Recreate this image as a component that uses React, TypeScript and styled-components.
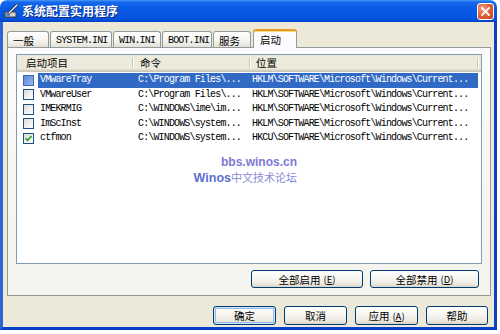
import React from "react";
import styled, { createGlobalStyle, css } from "styled-components";

const CJK = `"Noto Sans CJK SC", "Liberation Sans", sans-serif`;
const MONO = `"Liberation Mono", "Noto Sans CJK SC", monospace`;

const GlobalStyle = createGlobalStyle`
  html, body {
    margin: 0;
    padding: 0;
    background: #ffffff;
  }
  body {
    font-family: ${CJK};
  }
`;

type Entry = {
  name: string;
  cmd: string;
  loc: string;
  checked?: boolean;
  selected?: boolean;
};

const entries: Entry[] = [
  { name: "VMwareTray", cmd: "C:\\Program Files\\...", loc: "HKLM\\SOFTWARE\\Microsoft\\Windows\\Current...", selected: true },
  { name: "VMwareUser", cmd: "C:\\Program Files\\...", loc: "HKLM\\SOFTWARE\\Microsoft\\Windows\\Current..." },
  { name: "IMEKRMIG", cmd: "C:\\WINDOWS\\ime\\im...", loc: "HKLM\\SOFTWARE\\Microsoft\\Windows\\Current..." },
  { name: "ImScInst", cmd: "C:\\WINDOWS\\system...", loc: "HKLM\\SOFTWARE\\Microsoft\\Windows\\Current..." },
  { name: "ctfmon", cmd: "C:\\WINDOWS\\system...", loc: "HKCU\\SOFTWARE\\Microsoft\\Windows\\Current...", checked: true },
];

const tabs = [
  { label: "一般", w: 42, mono: false },
  { label: "SYSTEM.INI", w: 62, mono: true },
  { label: "WIN.INI", w: 48, mono: true },
  { label: "BOOT.INI", w: 50, mono: true },
  { label: "服务", w: 38, mono: false },
  { label: "启动", w: 44, mono: false, active: true },
];

const COLS = "116px 117px 228px 1fr";

const Window = styled.div`
  width: 497px;
  height: 330px;
  display: flex;
  flex-direction: column;
`;

const TitleBar = styled.div`
  height: 22px;
  flex: none;
  display: flex;
  align-items: center;
  gap: 4px;
  padding: 0 3px 0 4px;
  border-radius: 7px 7px 0 0;
  background: linear-gradient(
    to bottom,
    #4a96f7 0%,
    #1468ec 10%,
    #0a5be6 35%,
    #0656e3 65%,
    #0552dc 88%,
    #0342c4 100%
  );
`;

const Title = styled.div`
  flex: 1;
  color: #ffffff;
  font: bold 12px ${CJK};
  line-height: 22px;
  text-shadow: 1px 1px 0 #0b2a8a;
  white-space: nowrap;
`;

const CloseButton = styled.div`
  width: 17px;
  height: 17px;
  box-sizing: border-box;
  border: 1px solid #ffffff;
  border-radius: 3px;
  background: radial-gradient(circle at 30% 30%, #f0a080 0%, #e2643c 45%, #c4401c 100%);
  display: flex;
  align-items: center;
  justify-content: center;
`;

const Body = styled.div`
  flex: 1;
  display: flex;
  flex-direction: column;
  background: #ece9d8;
  border: 3px solid #0a40c8;
  border-top: none;
  border-left-color: #2c64d8;
  padding: 7px 3px 2px 4px;
  min-height: 0;
`;

const TabStrip = styled.div`
  height: 18px;
  flex: none;
  display: flex;
  align-items: flex-end;
  gap: 1px;
  position: relative;
  z-index: 1;
`;

const Tab = styled.div<{ $w: number; $active?: boolean; $mono?: boolean }>`
  width: ${(p) => p.$w}px;
  height: 16px;
  box-sizing: border-box;
  padding-left: 5px;
  padding-top: 1px;
  border: 1px solid #919b9c;
  border-bottom: none;
  border-radius: 3px 3px 0 0;
  background: linear-gradient(to bottom, #ffffff 0%, #f6f5f1 55%, #e4e1d6 100%);
  color: #000000;
  font-family: ${(p) => (p.$mono ? MONO : CJK)};
  font-size: ${(p) => (p.$mono ? "10px" : "10.5px")};
  letter-spacing: ${(p) => (p.$mono ? "-0.85px" : "0")};
  line-height: 15px;
  white-space: nowrap;
  ${(p) =>
    p.$active &&
    css`
      height: 19px;
      margin-bottom: -1px;
      margin-left: 1px;
      padding-left: 6px;
      padding-top: 1px;
      background: #fcfcfe;
      border-top: 2px solid #e69a2c;
      box-shadow: inset 0 1px 0 #f8d878;
    `}
`;

const Panel = styled.div`
  flex: 1;
  min-height: 0;
  display: flex;
  flex-direction: column;
  border: 1px solid #919b9c;
  background: linear-gradient(to bottom, #fcfcfe 0%, #f7f6f2 50%, #f4f3ee 100%);
  padding: 6px 8px 7px 8px;
`;

const List = styled.div`
  flex: 1;
  min-height: 0;
  position: relative;
  overflow: hidden;
  border: 1px solid #7f9db9;
  background: #ffffff;
`;

const Header = styled.div`
  display: grid;
  grid-template-columns: ${COLS};
  height: 17px;
  margin-bottom: 1px;
  background: #ebeadb;
  box-shadow: inset 0 -1px 0 #cbc7b8, inset 0 -2px 0 #d6d2c2, inset 0 -3px 0 #e2decd;
`;

const HeadCell = styled.div<{ $pad: number }>`
  position: relative;
  padding-left: ${(p) => p.$pad}px;
  font: 10.5px ${CJK};
  line-height: 16px;
  color: #000000;
  white-space: nowrap;
  &::after {
    content: "";
    position: absolute;
    right: 0;
    top: 3px;
    height: 10px;
    width: 1px;
    background: #c7c5b2;
    box-shadow: 1px 0 0 #ffffff;
  }
`;

const Row = styled.div`
  display: grid;
  grid-template-columns: ${COLS};
  height: 14.5px;
`;

const Cell = styled.div<{ $pad: number; $selected?: boolean }>`
  padding-left: ${(p) => p.$pad}px;
  font-family: ${MONO};
  font-size: 10px;
  letter-spacing: -0.85px;
  line-height: 14.5px;
  white-space: nowrap;
  overflow: hidden;
  color: ${(p) => (p.$selected ? "#ffffff" : "#000000")};
  background: ${(p) => (p.$selected ? "#316ac5" : "transparent")};
`;

const NameCell = styled.div`
  display: flex;
  align-items: center;
  padding-left: 6px;
  min-width: 0;
`;

const NameLabel = styled.span<{ $selected?: boolean }>`
  flex: 1;
  height: 14.5px;
  margin-left: 4px;
  padding-left: 2px;
  font-family: ${MONO};
  font-size: 10px;
  letter-spacing: -0.85px;
  line-height: 14.5px;
  white-space: nowrap;
  color: ${(p) => (p.$selected ? "#ffffff" : "#000000")};
  background: ${(p) => (p.$selected ? "#316ac5" : "transparent")};
`;

const Check = styled.span<{ $hot?: boolean }>`
  flex: none;
  width: 11px;
  height: 11px;
  box-sizing: border-box;
  border: 1px solid #1c5180;
  background: linear-gradient(135deg, #dcdcd7 0%, #f2f2ef 60%, #ffffff 100%);
  display: flex;
  align-items: center;
  justify-content: center;
  ${(p) =>
    p.$hot &&
    css`
      border-color: #3d68b0;
      background: linear-gradient(135deg, #5d8ad8 0%, #7fa3e6 60%, #9cbaf0 100%);
    `}
`;

const Watermark = styled.div`
  position: absolute;
  right: 184px;
  top: 100px;
  text-align: right;
  line-height: 13px;
  pointer-events: none;
`;

const MarkLine = styled.div`
  font: bold 12px "Liberation Sans", ${CJK};
  color: #7a7ad6;
  white-space: nowrap;
`;

const MarkCjk = styled.span`
  font: 11px ${CJK};
  color: #8a8ad8;
`;

const MarkBrand = styled.span`
  font-size: 12.5px;
  color: #5d6fd0;
`;

const ButtonRow = styled.div<{ $gap: number; $top: number }>`
  flex: none;
  display: flex;
  justify-content: flex-end;
  gap: ${(p) => p.$gap}px;
  margin-top: ${(p) => p.$top}px;
  padding-right: 3px;
`;

const XpButton = styled.div<{ $w: number; $h: number; $default?: boolean }>`
  width: ${(p) => p.$w}px;
  height: ${(p) => p.$h}px;
  box-sizing: border-box;
  border: 1px solid #003c74;
  border-radius: 3px;
  background: linear-gradient(to bottom, #ffffff 0%, #f7f6f1 45%, #ece9df 80%, #d8d4c6 100%);
  display: flex;
  align-items: center;
  justify-content: center;
  font: 10.5px ${CJK};
  color: #000000;
  white-space: nowrap;
  ${(p) =>
    p.$default &&
    css`
      box-shadow: inset 0 0 0 1px #cee7ff, inset 0 0 0 2px #98b8ea;
    `}
  u {
    text-decoration: underline;
  }
`;

const Mnemonic = styled.span`
  margin-left: 3px;
  font-size: 9.5px;
`;

const AppIcon = () => (
  <svg width="14" height="14" viewBox="0 0 14 14">
    <rect x="1" y="8" width="11" height="5" fill="#d8d4cc" stroke="#3a3a4a" strokeWidth="1" />
    <rect x="2" y="9" width="4" height="3" fill="#6a8ad0" />
    <line x1="13" y1="1" x2="5" y2="9" stroke="#2a2a3a" strokeWidth="2.6" strokeLinecap="round" />
    <line x1="13" y1="1" x2="5" y2="9" stroke="#ffffff" strokeWidth="1.2" strokeLinecap="round" />
  </svg>
);

const CloseGlyph = () => (
  <svg width="9" height="9" viewBox="0 0 9 9">
    <path d="M1 1 L8 8 M8 1 L1 8" stroke="#ffffff" strokeWidth="1.8" strokeLinecap="square" />
  </svg>
);

const CheckMark = () => (
  <svg width="9" height="9" viewBox="0 0 9 9">
    <path d="M1.5 4.2 L3.6 6.4 L7.6 2" stroke="#21a121" strokeWidth="1.6" fill="none" />
  </svg>
);

const App: React.FunctionComponent = () => {
  return (
    <>
      <GlobalStyle />
      <Window>
        <TitleBar>
          <AppIcon />
          <Title>系统配置实用程序</Title>
          <CloseButton>
            <CloseGlyph />
          </CloseButton>
        </TitleBar>
        <Body>
          <TabStrip>
            {tabs.map((t) => (
              <Tab key={t.label} $w={t.w} $mono={t.mono} $active={t.active}>
                {t.label}
              </Tab>
            ))}
          </TabStrip>
          <Panel>
            <List>
              <Header>
                <HeadCell $pad={9}>启动项目</HeadCell>
                <HeadCell $pad={7}>命令</HeadCell>
                <HeadCell $pad={6}>位置</HeadCell>
              </Header>
              {entries.map((e) => (
                <Row key={e.name}>
                  <NameCell>
                    <Check $hot={e.selected}>{e.checked && <CheckMark />}</Check>
                    <NameLabel $selected={e.selected}>{e.name}</NameLabel>
                  </NameCell>
                  <Cell $pad={5} $selected={e.selected}>
                    {e.cmd}
                  </Cell>
                  <Cell $pad={2} $selected={e.selected}>
                    {e.loc}
                  </Cell>
                </Row>
              ))}
              <Watermark>
                <MarkLine>bbs.winos.cn</MarkLine>
                <MarkLine>
                  <MarkBrand>Winos</MarkBrand>
                  <MarkCjk>中文技术论坛</MarkCjk>
                </MarkLine>
              </Watermark>
            </List>
            <ButtonRow $gap={7} $top={6}>
              <XpButton $w={112} $h={18}>
                全部启用<Mnemonic>(<u>E</u>)</Mnemonic>
              </XpButton>
              <XpButton $w={109} $h={18}>
                全部禁用<Mnemonic>(<u>D</u>)</Mnemonic>
              </XpButton>
            </ButtonRow>
          </Panel>
          <ButtonRow $gap={8} $top={10}>
            <XpButton $w={63} $h={19} $default>
              确定
            </XpButton>
            <XpButton $w={63} $h={19}>
              取消
            </XpButton>
            <XpButton $w={63} $h={19}>
              应用<Mnemonic>(<u>A</u>)</Mnemonic>
            </XpButton>
            <XpButton $w={62} $h={19}>
              帮助
            </XpButton>
          </ButtonRow>
        </Body>
      </Window>
    </>
  );
};

export default App;
